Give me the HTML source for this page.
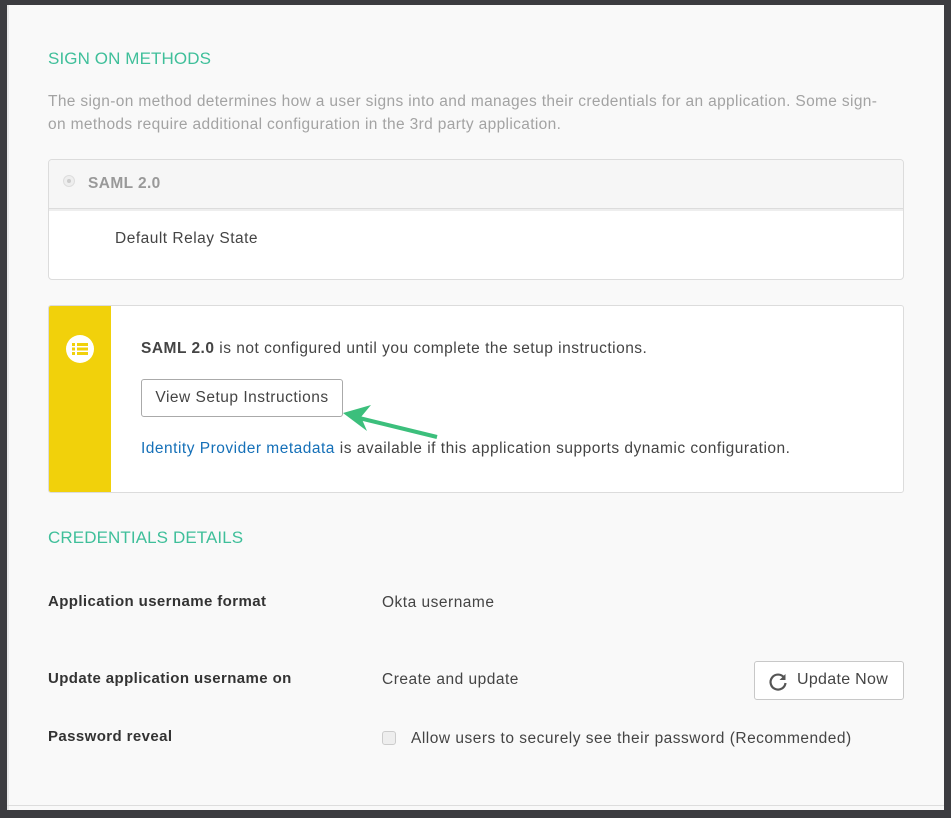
<!DOCTYPE html>
<html><head><meta charset="utf-8"><style>
*{box-sizing:border-box;margin:0;padding:0}
html,body{width:951px;height:818px;overflow:hidden;background:#3c3c40;font-family:"Liberation Sans",sans-serif}
.page{position:absolute;left:7px;top:5px;width:937px;height:805px;background:#f9f9f9}
.abs{position:absolute}
h2{position:absolute;font-weight:normal;color:#3fbf9a;font-size:17px;letter-spacing:0.1px}
.desc{left:41px;top:85px;width:845px;color:#a3a3a3;font-size:15.5px;letter-spacing:0.35px;line-height:23px}
.box1{left:41px;top:154px;width:856px;height:121px;border:1px solid #dcdcdc;border-radius:4px;background:#fff;overflow:hidden}
.box1 .hd{height:49px;background:#f6f6f6;border-bottom:1px solid #dcdcdc;box-shadow:0 2px 0 #eee}
.radio{left:14px;top:15px;width:12px;height:12px;border-radius:50%;border:1px solid #ddd;background:#eee}
.radio:after{content:"";position:absolute;left:3px;top:3px;width:4px;height:4px;border-radius:50%;background:#ccc}
.box2{left:41px;top:300px;width:856px;height:188px;border:1px solid #dcdcdc;border-radius:3px;background:#fff;overflow:hidden}
.yel{left:0;top:0;width:62px;height:188px;background:#f1d10b}
.t{color:#444;font-size:15.5px;letter-spacing:0.5px}
.btn{background:#fff;border:1px solid #aaa;border-radius:3px;color:#444;font-size:15.5px;letter-spacing:0.5px}
.lbl{color:#333;font-size:15px;font-weight:bold;letter-spacing:0.4px}
</style></head><body>
<div class="page">
<div class="abs" style="left:0;top:0;width:2px;height:805px;background:#e8e8e8"></div>
<h2 style="left:41px;top:44px">SIGN ON METHODS</h2>
<div class="abs desc">The sign-on method determines how a user signs into and manages their credentials for an application. Some sign-on methods require additional configuration in the 3rd party application.</div>
<div class="abs box1"><div class="hd"></div>
<div class="abs radio"></div>
<div class="abs" style="left:39px;top:15px;color:#999;font-weight:bold;font-size:15.5px;letter-spacing:0.4px">SAML 2.0</div>
<div class="abs t" style="left:66px;top:70px">Default Relay State</div>
</div>
<div class="abs box2"><div class="abs yel">
<svg class="abs" style="left:17px;top:29px" width="28" height="28" viewBox="0 0 28 28"><circle cx="14" cy="14" r="14" fill="#fff"/><g fill="#f1d10b"><rect x="6" y="8" width="3" height="3"/><rect x="11" y="8" width="11" height="3"/><rect x="6" y="12.5" width="3" height="3"/><rect x="11" y="12.5" width="11" height="3"/><rect x="6" y="17" width="3" height="3"/><rect x="11" y="17" width="11" height="3"/></g></svg>
</div>
<div class="abs t" style="left:92px;top:34px"><b>SAML 2.0</b> is not configured until you complete the setup instructions.</div>
<div class="abs btn" style="left:92px;top:73px;width:202px;height:38px;line-height:36px;text-align:center">View Setup Instructions</div>
<div class="abs t" style="left:92px;top:134px"><span style="color:#1570b8">Identity Provider metadata</span> is available if this application supports dynamic configuration.</div>
</div>
<svg class="abs" style="left:330px;top:398px" width="110" height="45"><path d="M100 34 L18 14" stroke="#3cbf7c" stroke-width="4"/><path d="M6 10 L34 2 L24 14 L30 28 Z" fill="#3cbf7c"/></svg>
<h2 style="left:41px;top:523px">CREDENTIALS DETAILS</h2>
<div class="abs lbl" style="left:41px;top:588px">Application username format</div>
<div class="abs t" style="left:375px;top:589px">Okta username</div>
<div class="abs lbl" style="left:41px;top:665px">Update application username on</div>
<div class="abs t" style="left:375px;top:666px">Create and update</div>
<div class="abs btn" style="left:747px;top:656px;width:150px;height:39px;border-color:#c8c8c8;font-size:16px;letter-spacing:0.3px">
<svg class="abs" style="left:13px;top:10px" width="20" height="20" viewBox="0 0 20 20"><path d="M16 5.5 A7.5 7.5 0 1 0 17.5 11" fill="none" stroke="#555" stroke-width="2.2"/><path d="M17.5 2 L17.5 8 L11.5 8 Z" fill="#555"/></svg>
<span class="abs" style="left:42px;top:9px">Update Now</span></div>
<div class="abs lbl" style="left:41px;top:723px">Password reveal</div>
<div class="abs" style="left:375px;top:726px;width:14px;height:14px;border:1px solid #ccc;border-radius:3px;background:#eee"></div>
<div class="abs t" style="left:404px;top:725px">Allow users to securely see their password (Recommended)</div>
<div class="abs" style="left:0;top:800px;width:937px;height:1px;background:#ddd"></div>
</div>
</body></html>
